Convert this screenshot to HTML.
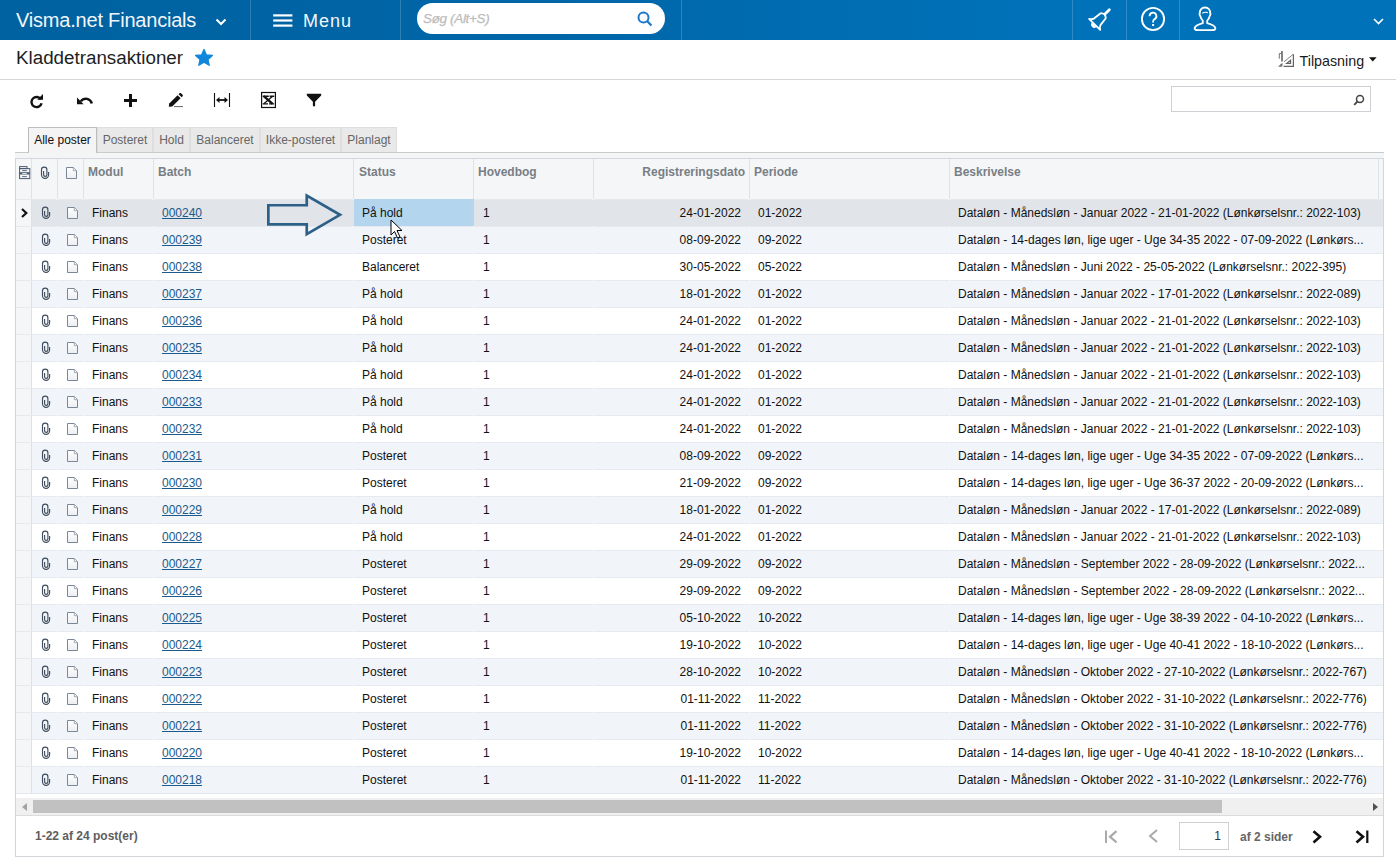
<!DOCTYPE html>
<html><head><meta charset="utf-8">
<style>
*{margin:0;padding:0;box-sizing:border-box}
html,body{width:1396px;height:857px;overflow:hidden;background:#fff;font-family:"Liberation Sans",sans-serif;position:relative}
.abs{position:absolute}
#hdr{position:absolute;left:0;top:0;width:1396px;height:40px;background:linear-gradient(90deg,#0062a0 0%,#0066a8 40%,#0072b9 75%,#0072b9 100%)}
.vsep{position:absolute;top:0;width:1px;height:40px;background:rgba(255,255,255,0.18)}
.brand{position:absolute;left:16px;top:9px;color:#f2f6fa;font-size:20px;letter-spacing:-0.2px}
.menu{position:absolute;left:303px;top:11px;color:#f2f6fa;font-size:18px;letter-spacing:1px}
.search{position:absolute;left:417px;top:3px;width:248px;height:31px;background:#fff;border-radius:16px}
.search .ph{position:absolute;left:6px;top:7.5px;font-size:13.5px;color:#bcbcbc;font-style:italic;letter-spacing:-0.35px;-webkit-text-stroke:0.25px #bcbcbc}
.title{position:absolute;left:16px;top:47px;font-size:18.8px;color:#1e1e1e}
.hline{position:absolute;left:0;width:1396px;height:1px}
.tb{position:absolute}
.tabs{position:absolute;top:127px;height:26px}
.tab{position:absolute;top:127px;height:25px;background:#e9e9e9;border:1px solid #dedede;border-bottom:none;font-size:12px;color:#666;padding-top:5px;text-align:center}
.tab.act{background:#f4f4f4;color:#111;border-color:#bdbdbd;height:26px;z-index:2}
#grid{position:absolute;left:15px;top:158px;width:1369px;height:699px;border-left:1px solid #d2d5d9;border-right:1px solid #d2d5d9}
.gh{position:absolute;top:158px;left:16px;width:1367px;height:41px;background:#f5f6f8;border-top:1px solid #d3d6da}
.hd{position:absolute;top:165px;font-size:12px;font-weight:bold;color:#787e84}
.cdiv{position:absolute;top:159px;width:1px;height:40px;background:#e0e3e6}
.row{position:absolute;left:16px;width:1367px;height:27px;background:#fff;border-top:1px solid #e6e9ed}
.row.alt{background:#f1f4f8}
.row.sel{background:#e1e4e8}
.row .c0{position:absolute;left:0;top:0;width:16px;height:26px;background:#f5f6f8;border-right:1px solid #dde0e4}
.row .t{position:absolute;top:6px;font-size:12px;color:#111;white-space:nowrap}
.row .t.r{left:auto}
.row .lnk{color:#1a5a8c;text-decoration:underline}
.clip{position:absolute;left:25px;top:6px}
.doc{position:absolute;left:51px;top:7px}
.ind{position:absolute;left:5px;top:8px}
.selcell{position:absolute;left:338px;top:-1px;width:120px;height:27px;background:#b4d5ee}
.gp{position:absolute;top:-1px;width:1px;height:1px;background:#fbfcfd}
</style></head><body>
<div id="hdr">
  <div class="brand">Visma.net Financials</div>
  <svg class="abs" style="left:215px;top:18px" width="12" height="8" viewBox="0 0 12 8"><path d="M1.5 1.5L6 6L10.5 1.5" fill="none" stroke="#fff" stroke-width="2"/></svg>
  <div class="vsep" style="left:250px"></div>
  <svg class="abs" style="left:273px;top:14px" width="20" height="13" viewBox="0 0 20 13"><rect x="0.2" y="0.3" width="19.2" height="2.2" fill="#fff"/><rect x="0.2" y="5.4" width="19.2" height="2.2" fill="#fff"/><rect x="0.2" y="10.5" width="19.2" height="2.2" fill="#fff"/></svg>
  <div class="menu">Menu</div>
  <div class="vsep" style="left:400px"></div>
  <div class="search"><span class="ph">Søg (Alt+S)</span>
    <svg class="abs" style="left:220px;top:8px" width="16" height="16" viewBox="0 0 16 16"><circle cx="6.5" cy="6.5" r="5" fill="none" stroke="#1e78c8" stroke-width="2"/><path d="M10.2 10.2L14.5 14.5" stroke="#1e78c8" stroke-width="2.2"/></svg>
  </div>
  <div class="vsep" style="left:681px"></div>
  <div class="vsep" style="left:1072px"></div>
  <div class="vsep" style="left:1126px"></div>
  <div class="vsep" style="left:1179px"></div>
  <!-- bell -->
<svg class="abs" style="left:1085px;top:4px" width="30" height="30" viewBox="0 0 30 30"><g transform="rotate(45 15 15)"><path d="M15 1.8V7.6" stroke="#fff" stroke-width="2.8" stroke-linecap="round"/><path d="M11.4 10.4Q15 7 18.6 10.4L19.6 19Q20.4 21.2 22.8 22.6H7.2Q9.6 21.2 10.4 19Z" fill="none" stroke="#fff" stroke-width="1.8" stroke-linejoin="round"/><path d="M11.9 23.2A3.1 3 0 0 0 18.1 23.2Z" fill="#fff"/></g></svg>
<!-- help -->
<svg class="abs" style="left:1140px;top:6px" width="26" height="26" viewBox="0 0 26 26"><circle cx="13" cy="13" r="11.1" fill="none" stroke="#fff" stroke-width="1.9"/><path d="M9.6 10.2A3.4 3.4 0 1 1 14.6 13.1Q13.1 14 13.1 15.8V16.4" fill="none" stroke="#fff" stroke-width="1.8"/><rect x="12.1" y="18" width="2" height="2" fill="#fff"/></svg>
<!-- user -->
<svg class="abs" style="left:1192px;top:5px" width="26" height="28" viewBox="0 0 26 28"><path d="M13 2.5C9.6 2.5 7.7 4.8 7.8 8.2C7.3 8.6 7.4 10 8.2 10.8C8.7 13 9.6 14.6 10.8 15.6V18.2C7 19.2 3.2 20.6 2.6 23.2Q2.3 25 6 25.2H20Q23.7 25 23.4 23.2C22.8 20.6 19 19.2 15.2 18.2V15.6C16.4 14.6 17.3 13 17.8 10.8C18.6 10 18.7 8.6 18.2 8.2C18.3 4.8 16.4 2.5 13 2.5Z" fill="none" stroke="#fff" stroke-width="1.8" stroke-linejoin="round"/><path d="M10.2 8.4Q12.4 6.6 15.8 7.6" fill="none" stroke="#fff" stroke-width="1.2"/></svg>
<svg class="abs" style="left:1373px;top:18px" width="11" height="7" viewBox="0 0 11 7"><path d="M1 1L5.5 5.5L10 1" fill="none" stroke="#fff" stroke-width="1.6"/></svg>
</div>

<div class="title">Kladdetransaktioner</div>
<svg class="abs" style="left:194px;top:48px" width="20" height="19" viewBox="0 0 20 19"><path d="M10 1.4L12.4 6.9L18.4 7.5L13.9 11.5L15.2 17.3L10 14.3L4.8 17.3L6.1 11.5L1.6 7.5L7.6 6.9Z" fill="#1087dc" stroke="#1087dc" stroke-width="1.3" stroke-linejoin="round"/></svg>

<svg class="abs" style="left:1277px;top:50px" width="18" height="18" viewBox="0 0 18 18"><g fill="none" stroke="#646464"><path d="M5 1V11.5" stroke-width="1.6"/><path d="M2.3 8.7V3.5H4.2" stroke-width="0.9"/><path d="M6.6 16.4H16.4V4.2" stroke-width="1.2"/><path d="M7 11.8L16.2 4.3" stroke-width="0.8"/><path d="M9.6 13.4H13.6V10.2Z" stroke-width="1.1"/></g><path d="M1 16.8L4.2 13.4L5.8 13.6L5.2 16.8Z" fill="#777"/></svg>
<div class="abs" style="left:1299.5px;top:52.5px;font-size:14.3px;color:#1a1a1a">Tilpasning</div>
<svg class="abs" style="left:1369px;top:57px" width="8" height="5" viewBox="0 0 8 5"><path d="M0 0.2H7.6L3.8 4.6Z" fill="#111"/></svg>

<div class="hline" style="top:79px;background:#d4d6d9"></div>

<!-- toolbar -->
<svg class="tb" style="left:29px;top:93px" width="16" height="16" viewBox="0 0 16 16"><path d="M12 6.4A5.1 5.1 0 1 0 12.6 10.2" fill="none" stroke="#111" stroke-width="2.4"/><path d="M8.2 6.8H14V1Z" fill="#111"/></svg>
<svg class="tb" style="left:76px;top:94px" width="17" height="12" viewBox="0 0 17 12"><path d="M4.8 7.2A6.2 6.2 0 0 1 15.8 9.6" fill="none" stroke="#111" stroke-width="2.5"/><path d="M1 3.6V10.3H7.6Z" fill="#111"/></svg>
<svg class="tb" style="left:123px;top:93px" width="15" height="15" viewBox="0 0 15 15"><path d="M7.5 1V14M1 7.5H14" stroke="#111" stroke-width="3"/></svg>
<svg class="tb" style="left:168px;top:93px" width="16" height="15" viewBox="0 0 16 15"><path d="M0.8 13.8L1.2 10.6L9.6 2.2L12.6 5.2L4.2 13.6Z" fill="#111"/><path d="M10.6 1.2L11.6 0.2Q12.3 -0.4 13 0.2L14.6 1.8Q15.2 2.5 14.6 3.2L13.6 4.2Z" fill="#111"/><path d="M6 13.6H15" stroke="#555" stroke-width="0.9"/></svg>
<svg class="tb" style="left:212px;top:92px" width="20" height="16" viewBox="0 0 20 16"><path d="M2.5 1V15M17.5 1V15" stroke="#111" stroke-width="1.1"/><path d="M6 8H14" stroke="#111" stroke-width="1.8"/><path d="M4 8L7.5 5V11Z M16 8L12.5 5V11Z" fill="#111"/></svg>
<svg class="tb" style="left:260px;top:91px" width="17" height="18" viewBox="0 0 17 18"><rect x="1.6" y="1.5" width="13.8" height="15" fill="none" stroke="#111" stroke-width="1.2"/><path d="M3.8 5.2L12.6 12.8" stroke="#111" stroke-width="2.4"/><path d="M12.6 5.2L3.8 12.8" stroke="#111" stroke-width="1.3"/><path d="M2.7 5.2H8.8M9.6 5.2H14.2M2.7 12.9H8M9 12.9H14.2" stroke="#111" stroke-width="1.4"/></svg>
<svg class="tb" style="left:306px;top:93px" width="16" height="14" viewBox="0 0 16 14"><path d="M0.8 0.8H15.2V2.6L9.1 8.8V13.2H6.9V8.8L0.8 2.6Z" fill="#111"/></svg>

<div class="abs" style="left:1171px;top:86px;width:200px;height:26px;border:1px solid #cdd0d4;background:#fff"></div>
<svg class="abs" style="left:1353px;top:94px" width="12" height="12" viewBox="0 0 12 12"><circle cx="7" cy="5" r="3.5" fill="none" stroke="#444" stroke-width="1.5"/><path d="M4.6 7.4L1.2 10.8" stroke="#444" stroke-width="1.9"/></svg>

<!-- tabs -->
<div class="tab act" style="left:28px;width:69px">Alle poster</div>
<div class="tab" style="left:97px;width:56px">Posteret</div>
<div class="tab" style="left:153px;width:37px">Hold</div>
<div class="tab" style="left:190px;width:70px">Balanceret</div>
<div class="tab" style="left:260px;width:81px">Ikke-posteret</div>
<div class="tab" style="left:341px;width:56px">Planlagt</div>

<div id="grid"></div>
<div class="hline" style="left:15px;width:1369px;top:152px;background:#cacaca"></div>
<div class="abs" style="left:15px;top:153px;width:1369px;height:5px;background:#f4f5f7"></div>
<div class="gh"></div>
<div class="cdiv" style="left:31px"></div>
<div class="cdiv" style="left:57px"></div>
<div class="cdiv" style="left:83px"></div>
<div class="cdiv" style="left:153px"></div>
<div class="cdiv" style="left:353px"></div>
<div class="cdiv" style="left:473px"></div>
<div class="cdiv" style="left:593px"></div>
<div class="cdiv" style="left:749px"></div>
<div class="cdiv" style="left:949px"></div>
<div class="cdiv" style="left:1378px"></div>
<svg class="abs" style="left:19px;top:166px" width="12" height="14" viewBox="0 0 12 14"><g fill="none" stroke="#4a5a6e" stroke-width="1"><rect x="0.6" y="0.6" width="7.4" height="2"/><rect x="0.6" y="2.6" width="10.2" height="10"/><path d="M3.2 4.6H7.8M3.2 10.6H7.8" stroke-width="0.9"/></g><rect x="0.6" y="6.2" width="10.2" height="2.3" fill="#4a5a6e"/><rect x="3.2" y="7" width="4.6" height="0.8" fill="#fff"/></svg>
<svg class="abs" style="left:40px;top:166px" width="11" height="14" viewBox="0 0 11 14"><path d="M8.6 6V8.85A3.55 3.55 0 0 1 1.5 8.85V3.8A2.7 2.7 0 0 1 6.9 3.8V8.75A1.65 1.65 0 0 1 3.6 8.75V5" fill="none" stroke="#3f4d5e" stroke-width="1.15"/></svg>
<svg class="abs" style="left:66px;top:167px" width="12" height="13" viewBox="0 0 12 13"><defs><linearGradient id="dg" x1="0" y1="0" x2="0" y2="1"><stop offset="0" stop-color="#ffffff"/><stop offset="1" stop-color="#eceef2"/></linearGradient></defs><path d="M0.5 0.5H7.3L10.5 3.7V11.5H0.5Z" fill="url(#dg)" stroke="#7a8796" stroke-width="1"/><path d="M7.3 0.8V3.7H10.2" fill="#fff" stroke="#8a96a3" stroke-width="0.8"/></svg>
<div class="hd" style="left:88px">Modul</div>
<div class="hd" style="left:158px">Batch</div>
<div class="hd" style="left:359px">Status</div>
<div class="hd" style="left:478px">Hovedbog</div>
<div class="hd" style="right:651px">Registreringsdato</div>
<div class="hd" style="left:754px">Periode</div>
<div class="hd" style="left:954px">Beskrivelse</div>

<div class="row sel" style="top:199px"><i class="gp" style="left:41px"></i><i class="gp" style="left:67px"></i><i class="gp" style="left:137px"></i><i class="gp" style="left:337px"></i><i class="gp" style="left:457px"></i><i class="gp" style="left:577px"></i><i class="gp" style="left:733px"></i><i class="gp" style="left:933px"></i><div class="c0"><svg class="ind" width="7" height="10" viewBox="0 0 7 10"><path d="M1 1L5.3 5L1 9" fill="none" stroke="#111" stroke-width="2.2"/></svg></div><svg class="clip" width="11" height="14" viewBox="0 0 11 14"><path d="M8.6 6V8.85A3.55 3.55 0 0 1 1.5 8.85V3.8A2.7 2.7 0 0 1 6.9 3.8V8.75A1.65 1.65 0 0 1 3.6 8.75V5" fill="none" stroke="#3f4d5e" stroke-width="1.15"/></svg><svg class="doc" width="12" height="13" viewBox="0 0 12 13"><path d="M0.5 0.5H7.3L10.5 3.7V11.5H0.5Z" fill="url(#dg)" stroke="#7a8796" stroke-width="1"/><path d="M7.3 0.8V3.7H10.2" fill="#fff" stroke="#8a96a3" stroke-width="0.8"/></svg><span class="t" style="left:76px">Finans</span><a class="t lnk" style="left:146px">000240</a><div class="selcell"></div><span class="t" style="left:346px">På hold</span><span class="t" style="left:467px">1</span><span class="t r" style="right:642px">24-01-2022</span><span class="t" style="left:742px">01-2022</span><span class="t" style="left:942px">Dataløn - Månedsløn - Januar 2022 - 21-01-2022 (Lønkørselsnr.: 2022-103)</span></div>
<div class="row alt" style="top:226px"><i class="gp" style="left:41px"></i><i class="gp" style="left:67px"></i><i class="gp" style="left:137px"></i><i class="gp" style="left:337px"></i><i class="gp" style="left:457px"></i><i class="gp" style="left:577px"></i><i class="gp" style="left:733px"></i><i class="gp" style="left:933px"></i><div class="c0"></div><svg class="clip" width="11" height="14" viewBox="0 0 11 14"><path d="M8.6 6V8.85A3.55 3.55 0 0 1 1.5 8.85V3.8A2.7 2.7 0 0 1 6.9 3.8V8.75A1.65 1.65 0 0 1 3.6 8.75V5" fill="none" stroke="#3f4d5e" stroke-width="1.15"/></svg><svg class="doc" width="12" height="13" viewBox="0 0 12 13"><path d="M0.5 0.5H7.3L10.5 3.7V11.5H0.5Z" fill="url(#dg)" stroke="#7a8796" stroke-width="1"/><path d="M7.3 0.8V3.7H10.2" fill="#fff" stroke="#8a96a3" stroke-width="0.8"/></svg><span class="t" style="left:76px">Finans</span><a class="t lnk" style="left:146px">000239</a><span class="t" style="left:346px">Posteret</span><span class="t" style="left:467px">1</span><span class="t r" style="right:642px">08-09-2022</span><span class="t" style="left:742px">09-2022</span><span class="t" style="left:942px">Dataløn - 14-dages løn, lige uger - Uge 34-35 2022 - 07-09-2022 (Lønkørs...</span></div>
<div class="row" style="top:253px"><i class="gp" style="left:41px"></i><i class="gp" style="left:67px"></i><i class="gp" style="left:137px"></i><i class="gp" style="left:337px"></i><i class="gp" style="left:457px"></i><i class="gp" style="left:577px"></i><i class="gp" style="left:733px"></i><i class="gp" style="left:933px"></i><div class="c0"></div><svg class="clip" width="11" height="14" viewBox="0 0 11 14"><path d="M8.6 6V8.85A3.55 3.55 0 0 1 1.5 8.85V3.8A2.7 2.7 0 0 1 6.9 3.8V8.75A1.65 1.65 0 0 1 3.6 8.75V5" fill="none" stroke="#3f4d5e" stroke-width="1.15"/></svg><svg class="doc" width="12" height="13" viewBox="0 0 12 13"><path d="M0.5 0.5H7.3L10.5 3.7V11.5H0.5Z" fill="url(#dg)" stroke="#7a8796" stroke-width="1"/><path d="M7.3 0.8V3.7H10.2" fill="#fff" stroke="#8a96a3" stroke-width="0.8"/></svg><span class="t" style="left:76px">Finans</span><a class="t lnk" style="left:146px">000238</a><span class="t" style="left:346px">Balanceret</span><span class="t" style="left:467px">1</span><span class="t r" style="right:642px">30-05-2022</span><span class="t" style="left:742px">05-2022</span><span class="t" style="left:942px">Dataløn - Månedsløn - Juni 2022 - 25-05-2022 (Lønkørselsnr.: 2022-395)</span></div>
<div class="row alt" style="top:280px"><i class="gp" style="left:41px"></i><i class="gp" style="left:67px"></i><i class="gp" style="left:137px"></i><i class="gp" style="left:337px"></i><i class="gp" style="left:457px"></i><i class="gp" style="left:577px"></i><i class="gp" style="left:733px"></i><i class="gp" style="left:933px"></i><div class="c0"></div><svg class="clip" width="11" height="14" viewBox="0 0 11 14"><path d="M8.6 6V8.85A3.55 3.55 0 0 1 1.5 8.85V3.8A2.7 2.7 0 0 1 6.9 3.8V8.75A1.65 1.65 0 0 1 3.6 8.75V5" fill="none" stroke="#3f4d5e" stroke-width="1.15"/></svg><svg class="doc" width="12" height="13" viewBox="0 0 12 13"><path d="M0.5 0.5H7.3L10.5 3.7V11.5H0.5Z" fill="url(#dg)" stroke="#7a8796" stroke-width="1"/><path d="M7.3 0.8V3.7H10.2" fill="#fff" stroke="#8a96a3" stroke-width="0.8"/></svg><span class="t" style="left:76px">Finans</span><a class="t lnk" style="left:146px">000237</a><span class="t" style="left:346px">På hold</span><span class="t" style="left:467px">1</span><span class="t r" style="right:642px">18-01-2022</span><span class="t" style="left:742px">01-2022</span><span class="t" style="left:942px">Dataløn - Månedsløn - Januar 2022 - 17-01-2022 (Lønkørselsnr.: 2022-089)</span></div>
<div class="row" style="top:307px"><i class="gp" style="left:41px"></i><i class="gp" style="left:67px"></i><i class="gp" style="left:137px"></i><i class="gp" style="left:337px"></i><i class="gp" style="left:457px"></i><i class="gp" style="left:577px"></i><i class="gp" style="left:733px"></i><i class="gp" style="left:933px"></i><div class="c0"></div><svg class="clip" width="11" height="14" viewBox="0 0 11 14"><path d="M8.6 6V8.85A3.55 3.55 0 0 1 1.5 8.85V3.8A2.7 2.7 0 0 1 6.9 3.8V8.75A1.65 1.65 0 0 1 3.6 8.75V5" fill="none" stroke="#3f4d5e" stroke-width="1.15"/></svg><svg class="doc" width="12" height="13" viewBox="0 0 12 13"><path d="M0.5 0.5H7.3L10.5 3.7V11.5H0.5Z" fill="url(#dg)" stroke="#7a8796" stroke-width="1"/><path d="M7.3 0.8V3.7H10.2" fill="#fff" stroke="#8a96a3" stroke-width="0.8"/></svg><span class="t" style="left:76px">Finans</span><a class="t lnk" style="left:146px">000236</a><span class="t" style="left:346px">På hold</span><span class="t" style="left:467px">1</span><span class="t r" style="right:642px">24-01-2022</span><span class="t" style="left:742px">01-2022</span><span class="t" style="left:942px">Dataløn - Månedsløn - Januar 2022 - 21-01-2022 (Lønkørselsnr.: 2022-103)</span></div>
<div class="row alt" style="top:334px"><i class="gp" style="left:41px"></i><i class="gp" style="left:67px"></i><i class="gp" style="left:137px"></i><i class="gp" style="left:337px"></i><i class="gp" style="left:457px"></i><i class="gp" style="left:577px"></i><i class="gp" style="left:733px"></i><i class="gp" style="left:933px"></i><div class="c0"></div><svg class="clip" width="11" height="14" viewBox="0 0 11 14"><path d="M8.6 6V8.85A3.55 3.55 0 0 1 1.5 8.85V3.8A2.7 2.7 0 0 1 6.9 3.8V8.75A1.65 1.65 0 0 1 3.6 8.75V5" fill="none" stroke="#3f4d5e" stroke-width="1.15"/></svg><svg class="doc" width="12" height="13" viewBox="0 0 12 13"><path d="M0.5 0.5H7.3L10.5 3.7V11.5H0.5Z" fill="url(#dg)" stroke="#7a8796" stroke-width="1"/><path d="M7.3 0.8V3.7H10.2" fill="#fff" stroke="#8a96a3" stroke-width="0.8"/></svg><span class="t" style="left:76px">Finans</span><a class="t lnk" style="left:146px">000235</a><span class="t" style="left:346px">På hold</span><span class="t" style="left:467px">1</span><span class="t r" style="right:642px">24-01-2022</span><span class="t" style="left:742px">01-2022</span><span class="t" style="left:942px">Dataløn - Månedsløn - Januar 2022 - 21-01-2022 (Lønkørselsnr.: 2022-103)</span></div>
<div class="row" style="top:361px"><i class="gp" style="left:41px"></i><i class="gp" style="left:67px"></i><i class="gp" style="left:137px"></i><i class="gp" style="left:337px"></i><i class="gp" style="left:457px"></i><i class="gp" style="left:577px"></i><i class="gp" style="left:733px"></i><i class="gp" style="left:933px"></i><div class="c0"></div><svg class="clip" width="11" height="14" viewBox="0 0 11 14"><path d="M8.6 6V8.85A3.55 3.55 0 0 1 1.5 8.85V3.8A2.7 2.7 0 0 1 6.9 3.8V8.75A1.65 1.65 0 0 1 3.6 8.75V5" fill="none" stroke="#3f4d5e" stroke-width="1.15"/></svg><svg class="doc" width="12" height="13" viewBox="0 0 12 13"><path d="M0.5 0.5H7.3L10.5 3.7V11.5H0.5Z" fill="url(#dg)" stroke="#7a8796" stroke-width="1"/><path d="M7.3 0.8V3.7H10.2" fill="#fff" stroke="#8a96a3" stroke-width="0.8"/></svg><span class="t" style="left:76px">Finans</span><a class="t lnk" style="left:146px">000234</a><span class="t" style="left:346px">På hold</span><span class="t" style="left:467px">1</span><span class="t r" style="right:642px">24-01-2022</span><span class="t" style="left:742px">01-2022</span><span class="t" style="left:942px">Dataløn - Månedsløn - Januar 2022 - 21-01-2022 (Lønkørselsnr.: 2022-103)</span></div>
<div class="row alt" style="top:388px"><i class="gp" style="left:41px"></i><i class="gp" style="left:67px"></i><i class="gp" style="left:137px"></i><i class="gp" style="left:337px"></i><i class="gp" style="left:457px"></i><i class="gp" style="left:577px"></i><i class="gp" style="left:733px"></i><i class="gp" style="left:933px"></i><div class="c0"></div><svg class="clip" width="11" height="14" viewBox="0 0 11 14"><path d="M8.6 6V8.85A3.55 3.55 0 0 1 1.5 8.85V3.8A2.7 2.7 0 0 1 6.9 3.8V8.75A1.65 1.65 0 0 1 3.6 8.75V5" fill="none" stroke="#3f4d5e" stroke-width="1.15"/></svg><svg class="doc" width="12" height="13" viewBox="0 0 12 13"><path d="M0.5 0.5H7.3L10.5 3.7V11.5H0.5Z" fill="url(#dg)" stroke="#7a8796" stroke-width="1"/><path d="M7.3 0.8V3.7H10.2" fill="#fff" stroke="#8a96a3" stroke-width="0.8"/></svg><span class="t" style="left:76px">Finans</span><a class="t lnk" style="left:146px">000233</a><span class="t" style="left:346px">På hold</span><span class="t" style="left:467px">1</span><span class="t r" style="right:642px">24-01-2022</span><span class="t" style="left:742px">01-2022</span><span class="t" style="left:942px">Dataløn - Månedsløn - Januar 2022 - 21-01-2022 (Lønkørselsnr.: 2022-103)</span></div>
<div class="row" style="top:415px"><i class="gp" style="left:41px"></i><i class="gp" style="left:67px"></i><i class="gp" style="left:137px"></i><i class="gp" style="left:337px"></i><i class="gp" style="left:457px"></i><i class="gp" style="left:577px"></i><i class="gp" style="left:733px"></i><i class="gp" style="left:933px"></i><div class="c0"></div><svg class="clip" width="11" height="14" viewBox="0 0 11 14"><path d="M8.6 6V8.85A3.55 3.55 0 0 1 1.5 8.85V3.8A2.7 2.7 0 0 1 6.9 3.8V8.75A1.65 1.65 0 0 1 3.6 8.75V5" fill="none" stroke="#3f4d5e" stroke-width="1.15"/></svg><svg class="doc" width="12" height="13" viewBox="0 0 12 13"><path d="M0.5 0.5H7.3L10.5 3.7V11.5H0.5Z" fill="url(#dg)" stroke="#7a8796" stroke-width="1"/><path d="M7.3 0.8V3.7H10.2" fill="#fff" stroke="#8a96a3" stroke-width="0.8"/></svg><span class="t" style="left:76px">Finans</span><a class="t lnk" style="left:146px">000232</a><span class="t" style="left:346px">På hold</span><span class="t" style="left:467px">1</span><span class="t r" style="right:642px">24-01-2022</span><span class="t" style="left:742px">01-2022</span><span class="t" style="left:942px">Dataløn - Månedsløn - Januar 2022 - 21-01-2022 (Lønkørselsnr.: 2022-103)</span></div>
<div class="row alt" style="top:442px"><i class="gp" style="left:41px"></i><i class="gp" style="left:67px"></i><i class="gp" style="left:137px"></i><i class="gp" style="left:337px"></i><i class="gp" style="left:457px"></i><i class="gp" style="left:577px"></i><i class="gp" style="left:733px"></i><i class="gp" style="left:933px"></i><div class="c0"></div><svg class="clip" width="11" height="14" viewBox="0 0 11 14"><path d="M8.6 6V8.85A3.55 3.55 0 0 1 1.5 8.85V3.8A2.7 2.7 0 0 1 6.9 3.8V8.75A1.65 1.65 0 0 1 3.6 8.75V5" fill="none" stroke="#3f4d5e" stroke-width="1.15"/></svg><svg class="doc" width="12" height="13" viewBox="0 0 12 13"><path d="M0.5 0.5H7.3L10.5 3.7V11.5H0.5Z" fill="url(#dg)" stroke="#7a8796" stroke-width="1"/><path d="M7.3 0.8V3.7H10.2" fill="#fff" stroke="#8a96a3" stroke-width="0.8"/></svg><span class="t" style="left:76px">Finans</span><a class="t lnk" style="left:146px">000231</a><span class="t" style="left:346px">Posteret</span><span class="t" style="left:467px">1</span><span class="t r" style="right:642px">08-09-2022</span><span class="t" style="left:742px">09-2022</span><span class="t" style="left:942px">Dataløn - 14-dages løn, lige uger - Uge 34-35 2022 - 07-09-2022 (Lønkørs...</span></div>
<div class="row" style="top:469px"><i class="gp" style="left:41px"></i><i class="gp" style="left:67px"></i><i class="gp" style="left:137px"></i><i class="gp" style="left:337px"></i><i class="gp" style="left:457px"></i><i class="gp" style="left:577px"></i><i class="gp" style="left:733px"></i><i class="gp" style="left:933px"></i><div class="c0"></div><svg class="clip" width="11" height="14" viewBox="0 0 11 14"><path d="M8.6 6V8.85A3.55 3.55 0 0 1 1.5 8.85V3.8A2.7 2.7 0 0 1 6.9 3.8V8.75A1.65 1.65 0 0 1 3.6 8.75V5" fill="none" stroke="#3f4d5e" stroke-width="1.15"/></svg><svg class="doc" width="12" height="13" viewBox="0 0 12 13"><path d="M0.5 0.5H7.3L10.5 3.7V11.5H0.5Z" fill="url(#dg)" stroke="#7a8796" stroke-width="1"/><path d="M7.3 0.8V3.7H10.2" fill="#fff" stroke="#8a96a3" stroke-width="0.8"/></svg><span class="t" style="left:76px">Finans</span><a class="t lnk" style="left:146px">000230</a><span class="t" style="left:346px">Posteret</span><span class="t" style="left:467px">1</span><span class="t r" style="right:642px">21-09-2022</span><span class="t" style="left:742px">09-2022</span><span class="t" style="left:942px">Dataløn - 14-dages løn, lige uger - Uge 36-37 2022 - 20-09-2022 (Lønkørs...</span></div>
<div class="row alt" style="top:496px"><i class="gp" style="left:41px"></i><i class="gp" style="left:67px"></i><i class="gp" style="left:137px"></i><i class="gp" style="left:337px"></i><i class="gp" style="left:457px"></i><i class="gp" style="left:577px"></i><i class="gp" style="left:733px"></i><i class="gp" style="left:933px"></i><div class="c0"></div><svg class="clip" width="11" height="14" viewBox="0 0 11 14"><path d="M8.6 6V8.85A3.55 3.55 0 0 1 1.5 8.85V3.8A2.7 2.7 0 0 1 6.9 3.8V8.75A1.65 1.65 0 0 1 3.6 8.75V5" fill="none" stroke="#3f4d5e" stroke-width="1.15"/></svg><svg class="doc" width="12" height="13" viewBox="0 0 12 13"><path d="M0.5 0.5H7.3L10.5 3.7V11.5H0.5Z" fill="url(#dg)" stroke="#7a8796" stroke-width="1"/><path d="M7.3 0.8V3.7H10.2" fill="#fff" stroke="#8a96a3" stroke-width="0.8"/></svg><span class="t" style="left:76px">Finans</span><a class="t lnk" style="left:146px">000229</a><span class="t" style="left:346px">På hold</span><span class="t" style="left:467px">1</span><span class="t r" style="right:642px">18-01-2022</span><span class="t" style="left:742px">01-2022</span><span class="t" style="left:942px">Dataløn - Månedsløn - Januar 2022 - 17-01-2022 (Lønkørselsnr.: 2022-089)</span></div>
<div class="row" style="top:523px"><i class="gp" style="left:41px"></i><i class="gp" style="left:67px"></i><i class="gp" style="left:137px"></i><i class="gp" style="left:337px"></i><i class="gp" style="left:457px"></i><i class="gp" style="left:577px"></i><i class="gp" style="left:733px"></i><i class="gp" style="left:933px"></i><div class="c0"></div><svg class="clip" width="11" height="14" viewBox="0 0 11 14"><path d="M8.6 6V8.85A3.55 3.55 0 0 1 1.5 8.85V3.8A2.7 2.7 0 0 1 6.9 3.8V8.75A1.65 1.65 0 0 1 3.6 8.75V5" fill="none" stroke="#3f4d5e" stroke-width="1.15"/></svg><svg class="doc" width="12" height="13" viewBox="0 0 12 13"><path d="M0.5 0.5H7.3L10.5 3.7V11.5H0.5Z" fill="url(#dg)" stroke="#7a8796" stroke-width="1"/><path d="M7.3 0.8V3.7H10.2" fill="#fff" stroke="#8a96a3" stroke-width="0.8"/></svg><span class="t" style="left:76px">Finans</span><a class="t lnk" style="left:146px">000228</a><span class="t" style="left:346px">På hold</span><span class="t" style="left:467px">1</span><span class="t r" style="right:642px">24-01-2022</span><span class="t" style="left:742px">01-2022</span><span class="t" style="left:942px">Dataløn - Månedsløn - Januar 2022 - 21-01-2022 (Lønkørselsnr.: 2022-103)</span></div>
<div class="row alt" style="top:550px"><i class="gp" style="left:41px"></i><i class="gp" style="left:67px"></i><i class="gp" style="left:137px"></i><i class="gp" style="left:337px"></i><i class="gp" style="left:457px"></i><i class="gp" style="left:577px"></i><i class="gp" style="left:733px"></i><i class="gp" style="left:933px"></i><div class="c0"></div><svg class="clip" width="11" height="14" viewBox="0 0 11 14"><path d="M8.6 6V8.85A3.55 3.55 0 0 1 1.5 8.85V3.8A2.7 2.7 0 0 1 6.9 3.8V8.75A1.65 1.65 0 0 1 3.6 8.75V5" fill="none" stroke="#3f4d5e" stroke-width="1.15"/></svg><svg class="doc" width="12" height="13" viewBox="0 0 12 13"><path d="M0.5 0.5H7.3L10.5 3.7V11.5H0.5Z" fill="url(#dg)" stroke="#7a8796" stroke-width="1"/><path d="M7.3 0.8V3.7H10.2" fill="#fff" stroke="#8a96a3" stroke-width="0.8"/></svg><span class="t" style="left:76px">Finans</span><a class="t lnk" style="left:146px">000227</a><span class="t" style="left:346px">Posteret</span><span class="t" style="left:467px">1</span><span class="t r" style="right:642px">29-09-2022</span><span class="t" style="left:742px">09-2022</span><span class="t" style="left:942px">Dataløn - Månedsløn - September 2022 - 28-09-2022 (Lønkørselsnr.: 2022...</span></div>
<div class="row" style="top:577px"><i class="gp" style="left:41px"></i><i class="gp" style="left:67px"></i><i class="gp" style="left:137px"></i><i class="gp" style="left:337px"></i><i class="gp" style="left:457px"></i><i class="gp" style="left:577px"></i><i class="gp" style="left:733px"></i><i class="gp" style="left:933px"></i><div class="c0"></div><svg class="clip" width="11" height="14" viewBox="0 0 11 14"><path d="M8.6 6V8.85A3.55 3.55 0 0 1 1.5 8.85V3.8A2.7 2.7 0 0 1 6.9 3.8V8.75A1.65 1.65 0 0 1 3.6 8.75V5" fill="none" stroke="#3f4d5e" stroke-width="1.15"/></svg><svg class="doc" width="12" height="13" viewBox="0 0 12 13"><path d="M0.5 0.5H7.3L10.5 3.7V11.5H0.5Z" fill="url(#dg)" stroke="#7a8796" stroke-width="1"/><path d="M7.3 0.8V3.7H10.2" fill="#fff" stroke="#8a96a3" stroke-width="0.8"/></svg><span class="t" style="left:76px">Finans</span><a class="t lnk" style="left:146px">000226</a><span class="t" style="left:346px">Posteret</span><span class="t" style="left:467px">1</span><span class="t r" style="right:642px">29-09-2022</span><span class="t" style="left:742px">09-2022</span><span class="t" style="left:942px">Dataløn - Månedsløn - September 2022 - 28-09-2022 (Lønkørselsnr.: 2022...</span></div>
<div class="row alt" style="top:604px"><i class="gp" style="left:41px"></i><i class="gp" style="left:67px"></i><i class="gp" style="left:137px"></i><i class="gp" style="left:337px"></i><i class="gp" style="left:457px"></i><i class="gp" style="left:577px"></i><i class="gp" style="left:733px"></i><i class="gp" style="left:933px"></i><div class="c0"></div><svg class="clip" width="11" height="14" viewBox="0 0 11 14"><path d="M8.6 6V8.85A3.55 3.55 0 0 1 1.5 8.85V3.8A2.7 2.7 0 0 1 6.9 3.8V8.75A1.65 1.65 0 0 1 3.6 8.75V5" fill="none" stroke="#3f4d5e" stroke-width="1.15"/></svg><svg class="doc" width="12" height="13" viewBox="0 0 12 13"><path d="M0.5 0.5H7.3L10.5 3.7V11.5H0.5Z" fill="url(#dg)" stroke="#7a8796" stroke-width="1"/><path d="M7.3 0.8V3.7H10.2" fill="#fff" stroke="#8a96a3" stroke-width="0.8"/></svg><span class="t" style="left:76px">Finans</span><a class="t lnk" style="left:146px">000225</a><span class="t" style="left:346px">Posteret</span><span class="t" style="left:467px">1</span><span class="t r" style="right:642px">05-10-2022</span><span class="t" style="left:742px">10-2022</span><span class="t" style="left:942px">Dataløn - 14-dages løn, lige uger - Uge 38-39 2022 - 04-10-2022 (Lønkørs...</span></div>
<div class="row" style="top:631px"><i class="gp" style="left:41px"></i><i class="gp" style="left:67px"></i><i class="gp" style="left:137px"></i><i class="gp" style="left:337px"></i><i class="gp" style="left:457px"></i><i class="gp" style="left:577px"></i><i class="gp" style="left:733px"></i><i class="gp" style="left:933px"></i><div class="c0"></div><svg class="clip" width="11" height="14" viewBox="0 0 11 14"><path d="M8.6 6V8.85A3.55 3.55 0 0 1 1.5 8.85V3.8A2.7 2.7 0 0 1 6.9 3.8V8.75A1.65 1.65 0 0 1 3.6 8.75V5" fill="none" stroke="#3f4d5e" stroke-width="1.15"/></svg><svg class="doc" width="12" height="13" viewBox="0 0 12 13"><path d="M0.5 0.5H7.3L10.5 3.7V11.5H0.5Z" fill="url(#dg)" stroke="#7a8796" stroke-width="1"/><path d="M7.3 0.8V3.7H10.2" fill="#fff" stroke="#8a96a3" stroke-width="0.8"/></svg><span class="t" style="left:76px">Finans</span><a class="t lnk" style="left:146px">000224</a><span class="t" style="left:346px">Posteret</span><span class="t" style="left:467px">1</span><span class="t r" style="right:642px">19-10-2022</span><span class="t" style="left:742px">10-2022</span><span class="t" style="left:942px">Dataløn - 14-dages løn, lige uger - Uge 40-41 2022 - 18-10-2022 (Lønkørs...</span></div>
<div class="row alt" style="top:658px"><i class="gp" style="left:41px"></i><i class="gp" style="left:67px"></i><i class="gp" style="left:137px"></i><i class="gp" style="left:337px"></i><i class="gp" style="left:457px"></i><i class="gp" style="left:577px"></i><i class="gp" style="left:733px"></i><i class="gp" style="left:933px"></i><div class="c0"></div><svg class="clip" width="11" height="14" viewBox="0 0 11 14"><path d="M8.6 6V8.85A3.55 3.55 0 0 1 1.5 8.85V3.8A2.7 2.7 0 0 1 6.9 3.8V8.75A1.65 1.65 0 0 1 3.6 8.75V5" fill="none" stroke="#3f4d5e" stroke-width="1.15"/></svg><svg class="doc" width="12" height="13" viewBox="0 0 12 13"><path d="M0.5 0.5H7.3L10.5 3.7V11.5H0.5Z" fill="url(#dg)" stroke="#7a8796" stroke-width="1"/><path d="M7.3 0.8V3.7H10.2" fill="#fff" stroke="#8a96a3" stroke-width="0.8"/></svg><span class="t" style="left:76px">Finans</span><a class="t lnk" style="left:146px">000223</a><span class="t" style="left:346px">Posteret</span><span class="t" style="left:467px">1</span><span class="t r" style="right:642px">28-10-2022</span><span class="t" style="left:742px">10-2022</span><span class="t" style="left:942px">Dataløn - Månedsløn - Oktober 2022 - 27-10-2022 (Lønkørselsnr.: 2022-767)</span></div>
<div class="row" style="top:685px"><i class="gp" style="left:41px"></i><i class="gp" style="left:67px"></i><i class="gp" style="left:137px"></i><i class="gp" style="left:337px"></i><i class="gp" style="left:457px"></i><i class="gp" style="left:577px"></i><i class="gp" style="left:733px"></i><i class="gp" style="left:933px"></i><div class="c0"></div><svg class="clip" width="11" height="14" viewBox="0 0 11 14"><path d="M8.6 6V8.85A3.55 3.55 0 0 1 1.5 8.85V3.8A2.7 2.7 0 0 1 6.9 3.8V8.75A1.65 1.65 0 0 1 3.6 8.75V5" fill="none" stroke="#3f4d5e" stroke-width="1.15"/></svg><svg class="doc" width="12" height="13" viewBox="0 0 12 13"><path d="M0.5 0.5H7.3L10.5 3.7V11.5H0.5Z" fill="url(#dg)" stroke="#7a8796" stroke-width="1"/><path d="M7.3 0.8V3.7H10.2" fill="#fff" stroke="#8a96a3" stroke-width="0.8"/></svg><span class="t" style="left:76px">Finans</span><a class="t lnk" style="left:146px">000222</a><span class="t" style="left:346px">Posteret</span><span class="t" style="left:467px">1</span><span class="t r" style="right:642px">01-11-2022</span><span class="t" style="left:742px">11-2022</span><span class="t" style="left:942px">Dataløn - Månedsløn - Oktober 2022 - 31-10-2022 (Lønkørselsnr.: 2022-776)</span></div>
<div class="row alt" style="top:712px"><i class="gp" style="left:41px"></i><i class="gp" style="left:67px"></i><i class="gp" style="left:137px"></i><i class="gp" style="left:337px"></i><i class="gp" style="left:457px"></i><i class="gp" style="left:577px"></i><i class="gp" style="left:733px"></i><i class="gp" style="left:933px"></i><div class="c0"></div><svg class="clip" width="11" height="14" viewBox="0 0 11 14"><path d="M8.6 6V8.85A3.55 3.55 0 0 1 1.5 8.85V3.8A2.7 2.7 0 0 1 6.9 3.8V8.75A1.65 1.65 0 0 1 3.6 8.75V5" fill="none" stroke="#3f4d5e" stroke-width="1.15"/></svg><svg class="doc" width="12" height="13" viewBox="0 0 12 13"><path d="M0.5 0.5H7.3L10.5 3.7V11.5H0.5Z" fill="url(#dg)" stroke="#7a8796" stroke-width="1"/><path d="M7.3 0.8V3.7H10.2" fill="#fff" stroke="#8a96a3" stroke-width="0.8"/></svg><span class="t" style="left:76px">Finans</span><a class="t lnk" style="left:146px">000221</a><span class="t" style="left:346px">Posteret</span><span class="t" style="left:467px">1</span><span class="t r" style="right:642px">01-11-2022</span><span class="t" style="left:742px">11-2022</span><span class="t" style="left:942px">Dataløn - Månedsløn - Oktober 2022 - 31-10-2022 (Lønkørselsnr.: 2022-776)</span></div>
<div class="row" style="top:739px"><i class="gp" style="left:41px"></i><i class="gp" style="left:67px"></i><i class="gp" style="left:137px"></i><i class="gp" style="left:337px"></i><i class="gp" style="left:457px"></i><i class="gp" style="left:577px"></i><i class="gp" style="left:733px"></i><i class="gp" style="left:933px"></i><div class="c0"></div><svg class="clip" width="11" height="14" viewBox="0 0 11 14"><path d="M8.6 6V8.85A3.55 3.55 0 0 1 1.5 8.85V3.8A2.7 2.7 0 0 1 6.9 3.8V8.75A1.65 1.65 0 0 1 3.6 8.75V5" fill="none" stroke="#3f4d5e" stroke-width="1.15"/></svg><svg class="doc" width="12" height="13" viewBox="0 0 12 13"><path d="M0.5 0.5H7.3L10.5 3.7V11.5H0.5Z" fill="url(#dg)" stroke="#7a8796" stroke-width="1"/><path d="M7.3 0.8V3.7H10.2" fill="#fff" stroke="#8a96a3" stroke-width="0.8"/></svg><span class="t" style="left:76px">Finans</span><a class="t lnk" style="left:146px">000220</a><span class="t" style="left:346px">Posteret</span><span class="t" style="left:467px">1</span><span class="t r" style="right:642px">19-10-2022</span><span class="t" style="left:742px">10-2022</span><span class="t" style="left:942px">Dataløn - 14-dages løn, lige uger - Uge 40-41 2022 - 18-10-2022 (Lønkørs...</span></div>
<div class="row alt" style="top:766px"><i class="gp" style="left:41px"></i><i class="gp" style="left:67px"></i><i class="gp" style="left:137px"></i><i class="gp" style="left:337px"></i><i class="gp" style="left:457px"></i><i class="gp" style="left:577px"></i><i class="gp" style="left:733px"></i><i class="gp" style="left:933px"></i><div class="c0"></div><svg class="clip" width="11" height="14" viewBox="0 0 11 14"><path d="M8.6 6V8.85A3.55 3.55 0 0 1 1.5 8.85V3.8A2.7 2.7 0 0 1 6.9 3.8V8.75A1.65 1.65 0 0 1 3.6 8.75V5" fill="none" stroke="#3f4d5e" stroke-width="1.15"/></svg><svg class="doc" width="12" height="13" viewBox="0 0 12 13"><path d="M0.5 0.5H7.3L10.5 3.7V11.5H0.5Z" fill="url(#dg)" stroke="#7a8796" stroke-width="1"/><path d="M7.3 0.8V3.7H10.2" fill="#fff" stroke="#8a96a3" stroke-width="0.8"/></svg><span class="t" style="left:76px">Finans</span><a class="t lnk" style="left:146px">000218</a><span class="t" style="left:346px">Posteret</span><span class="t" style="left:467px">1</span><span class="t r" style="right:642px">01-11-2022</span><span class="t" style="left:742px">11-2022</span><span class="t" style="left:942px">Dataløn - Månedsløn - Oktober 2022 - 31-10-2022 (Lønkørselsnr.: 2022-776)</span></div>

<!-- arrow annotation -->
<svg class="abs" style="left:265px;top:192px" width="80" height="46" viewBox="0 0 80 46"><path d="M3.35 13.25H41.75V3.5L75 22.85L41.75 42.2V32.45H3.35Z" fill="none" stroke="#2d6088" stroke-width="2.7"/></svg>
<!-- cursor -->
<svg class="abs" style="left:390px;top:219px" width="14" height="20" viewBox="0 0 14 20"><path d="M1 1V16L4.5 12.5L7.5 19L10 18L7 11.5H12Z" fill="#fff" stroke="#000" stroke-width="1"/></svg>

<!-- scrollbar -->
<div class="abs" style="left:16px;top:793px;width:1367px;height:5px;background:#fff;border-top:1px solid #e3e6ea"></div>
<div class="abs" style="left:16px;top:798px;width:1367px;height:17px;background:#f0f0f0"></div>
<div class="abs" style="left:33px;top:800px;width:1189px;height:13px;background:#c1c1c1"></div>
<svg class="abs" style="left:22px;top:803px" width="5" height="8" viewBox="0 0 5 8"><path d="M5 0V8L0 4Z" fill="#a3a3a3"/></svg>
<svg class="abs" style="left:1373px;top:803px" width="5" height="8" viewBox="0 0 5 8"><path d="M0 0V8L5 4Z" fill="#505050"/></svg>
<div class="hline" style="left:16px;width:1367px;top:815px;background:#dcdcdc"></div>

<!-- footer -->
<div class="abs" style="left:35px;top:829px;font-size:12px;font-weight:bold;color:#5e5e5e">1-22 af 24 post(er)</div>
<svg class="abs" style="left:1104px;top:830px" width="14" height="14" viewBox="0 0 14 14"><path d="M2 0.5V13" stroke="#aaa" stroke-width="2"/><path d="M12.5 1.2L6 6.8L12.5 12.4" fill="none" stroke="#aaa" stroke-width="2.2"/></svg>
<svg class="abs" style="left:1148px;top:829px" width="10" height="14" viewBox="0 0 10 14"><path d="M9 1L2 7L9 13" fill="none" stroke="#aaa" stroke-width="2"/></svg>
<div class="abs" style="left:1179px;top:822px;width:50px;height:28px;border:1px solid #d0d0d0;background:#fff;font-size:12px;color:#333;text-align:right;padding:6px 7px 0 0">1</div>
<div class="abs" style="left:1240px;top:830px;font-size:12px;font-weight:bold;color:#666">af 2 sider</div>
<svg class="abs" style="left:1312px;top:830px" width="10" height="14" viewBox="0 0 10 14"><path d="M1.5 1.2L8 6.8L1.5 12.4" fill="none" stroke="#111" stroke-width="2.6"/></svg>
<svg class="abs" style="left:1355px;top:830px" width="14" height="14" viewBox="0 0 14 14"><path d="M1.5 1.2L8 6.8L1.5 12.4" fill="none" stroke="#111" stroke-width="2.6"/><path d="M12.3 0.5V13" stroke="#111" stroke-width="2.2"/></svg>
<div class="hline" style="left:15px;width:1369px;top:856px;background:#d2d5d9"></div>
</body></html>
